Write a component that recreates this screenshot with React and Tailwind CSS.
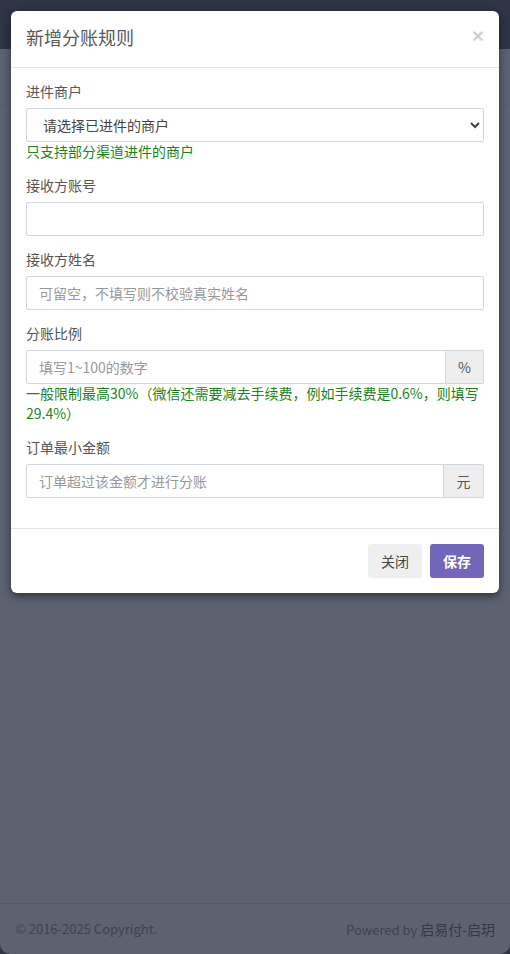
import React from "react";

function Label({ children }) {
  return <div className="mb-[9px] h-[16px] text-[14px] leading-[16px] text-[#555]">{children}</div>;
}

function Help({ children }) {
  return <div className="text-[14px] leading-[20px] text-[#1c841c] -mt-[1px] pb-[1px]">{children}</div>;
}

export default function App() {
  return (
    <div className="relative h-[954px] w-[510px] overflow-hidden bg-[#2f3446] font-['Noto_Sans_CJK_SC','Noto_Sans',sans-serif]">
      <div className="h-[49px]" />
      <div className="flex h-[905px] flex-col rounded-b-[10px] bg-[#5d6271]">
        <div className="h-[56px] border-b border-[#595e6c]" />
        <div className="flex-1" />
        <div className="flex h-[51px] items-center justify-between border-t border-[#565b69] px-[15px] text-[13px] text-[#3f4350]">
          <span>© 2016-2025 Copyright.</span>
          <span>
            Powered by <span className="text-[14px] text-[#353946]">启易付-启玥</span>
          </span>
        </div>
      </div>

      <div className="absolute left-[11px] top-[11px] w-[488px] rounded-[6px] bg-white shadow-[0_3px_9px_rgba(0,0,0,0.5)]">
        <div className="flex h-[57px] items-center justify-between border-b border-[#e5e5e5] px-[15px]">
          <h4 className="mb-[4px] text-[18px] leading-[26px] text-[#555a60]">新增分账规则</h4>
          <button className="mb-[8px] font-['Liberation_Sans',Arial,sans-serif] text-[21px] font-bold leading-none text-black/20">×</button>
        </div>

        <div className="p-[15px]">
          <div className="mb-[15px]">
            <Label>进件商户</Label>
            <select className="block h-[34px] w-full rounded-[2px] border border-[#d2d6de] bg-white px-3 text-[14px] text-[#444] outline-none">
              <option>请选择已进件的商户</option>
            </select>
            <Help>只支持部分渠道进件的商户</Help>
          </div>

          <div className="mb-[15px]">
            <Label>接收方账号</Label>
            <input className="block h-[34px] w-full rounded-[2px] border border-[#d2d6de] px-3 text-[14px] outline-none" />
          </div>

          <div className="mb-[15px]">
            <Label>接收方姓名</Label>
            <input
              placeholder="可留空，不填写则不校验真实姓名"
              className="block h-[34px] w-full rounded-[2px] border border-[#d2d6de] px-3 text-[14px] outline-none placeholder:text-[#999]"
            />
          </div>

          <div className="mb-[15px]">
            <Label>分账比例</Label>
            <div className="flex h-[34px]">
              <input
                placeholder="填写1~100的数字"
                className="block h-full min-w-0 flex-1 rounded-l-[2px] border border-[#d2d6de] px-3 text-[14px] outline-none placeholder:text-[#999]"
              />
              <span className="flex w-[38px] items-center justify-center rounded-r-[2px] border border-l-0 border-[#d2d6de] bg-[#eee] text-[14px] text-[#555]">
                %
              </span>
            </div>
            <Help>一般限制最高30%（微信还需要减去手续费，例如手续费是0.6%，则填写29.4%）</Help>
          </div>

          <div className="mb-[15px]">
            <Label>订单最小金额</Label>
            <div className="flex h-[34px]">
              <input
                placeholder="订单超过该金额才进行分账"
                className="block h-full min-w-0 flex-1 rounded-l-[2px] border border-[#d2d6de] px-3 text-[14px] outline-none placeholder:text-[#999]"
              />
              <span className="flex w-[40px] items-center justify-center rounded-r-[2px] border border-l-0 border-[#d2d6de] bg-[#eee] text-[14px] text-[#555]">
                元
              </span>
            </div>
          </div>
        </div>

        <div className="flex justify-end gap-[8px] border-t border-[#e5e5e5] p-[15px]">
          <button className="h-[34px] w-[54px] rounded-[3px] bg-[#efefef] text-[14px] text-[#444]">关闭</button>
          <button className="h-[34px] w-[54px] rounded-[3px] bg-[#7266ba] text-[14px] font-bold text-white">保存</button>
        </div>
      </div>
    </div>
  );
}
